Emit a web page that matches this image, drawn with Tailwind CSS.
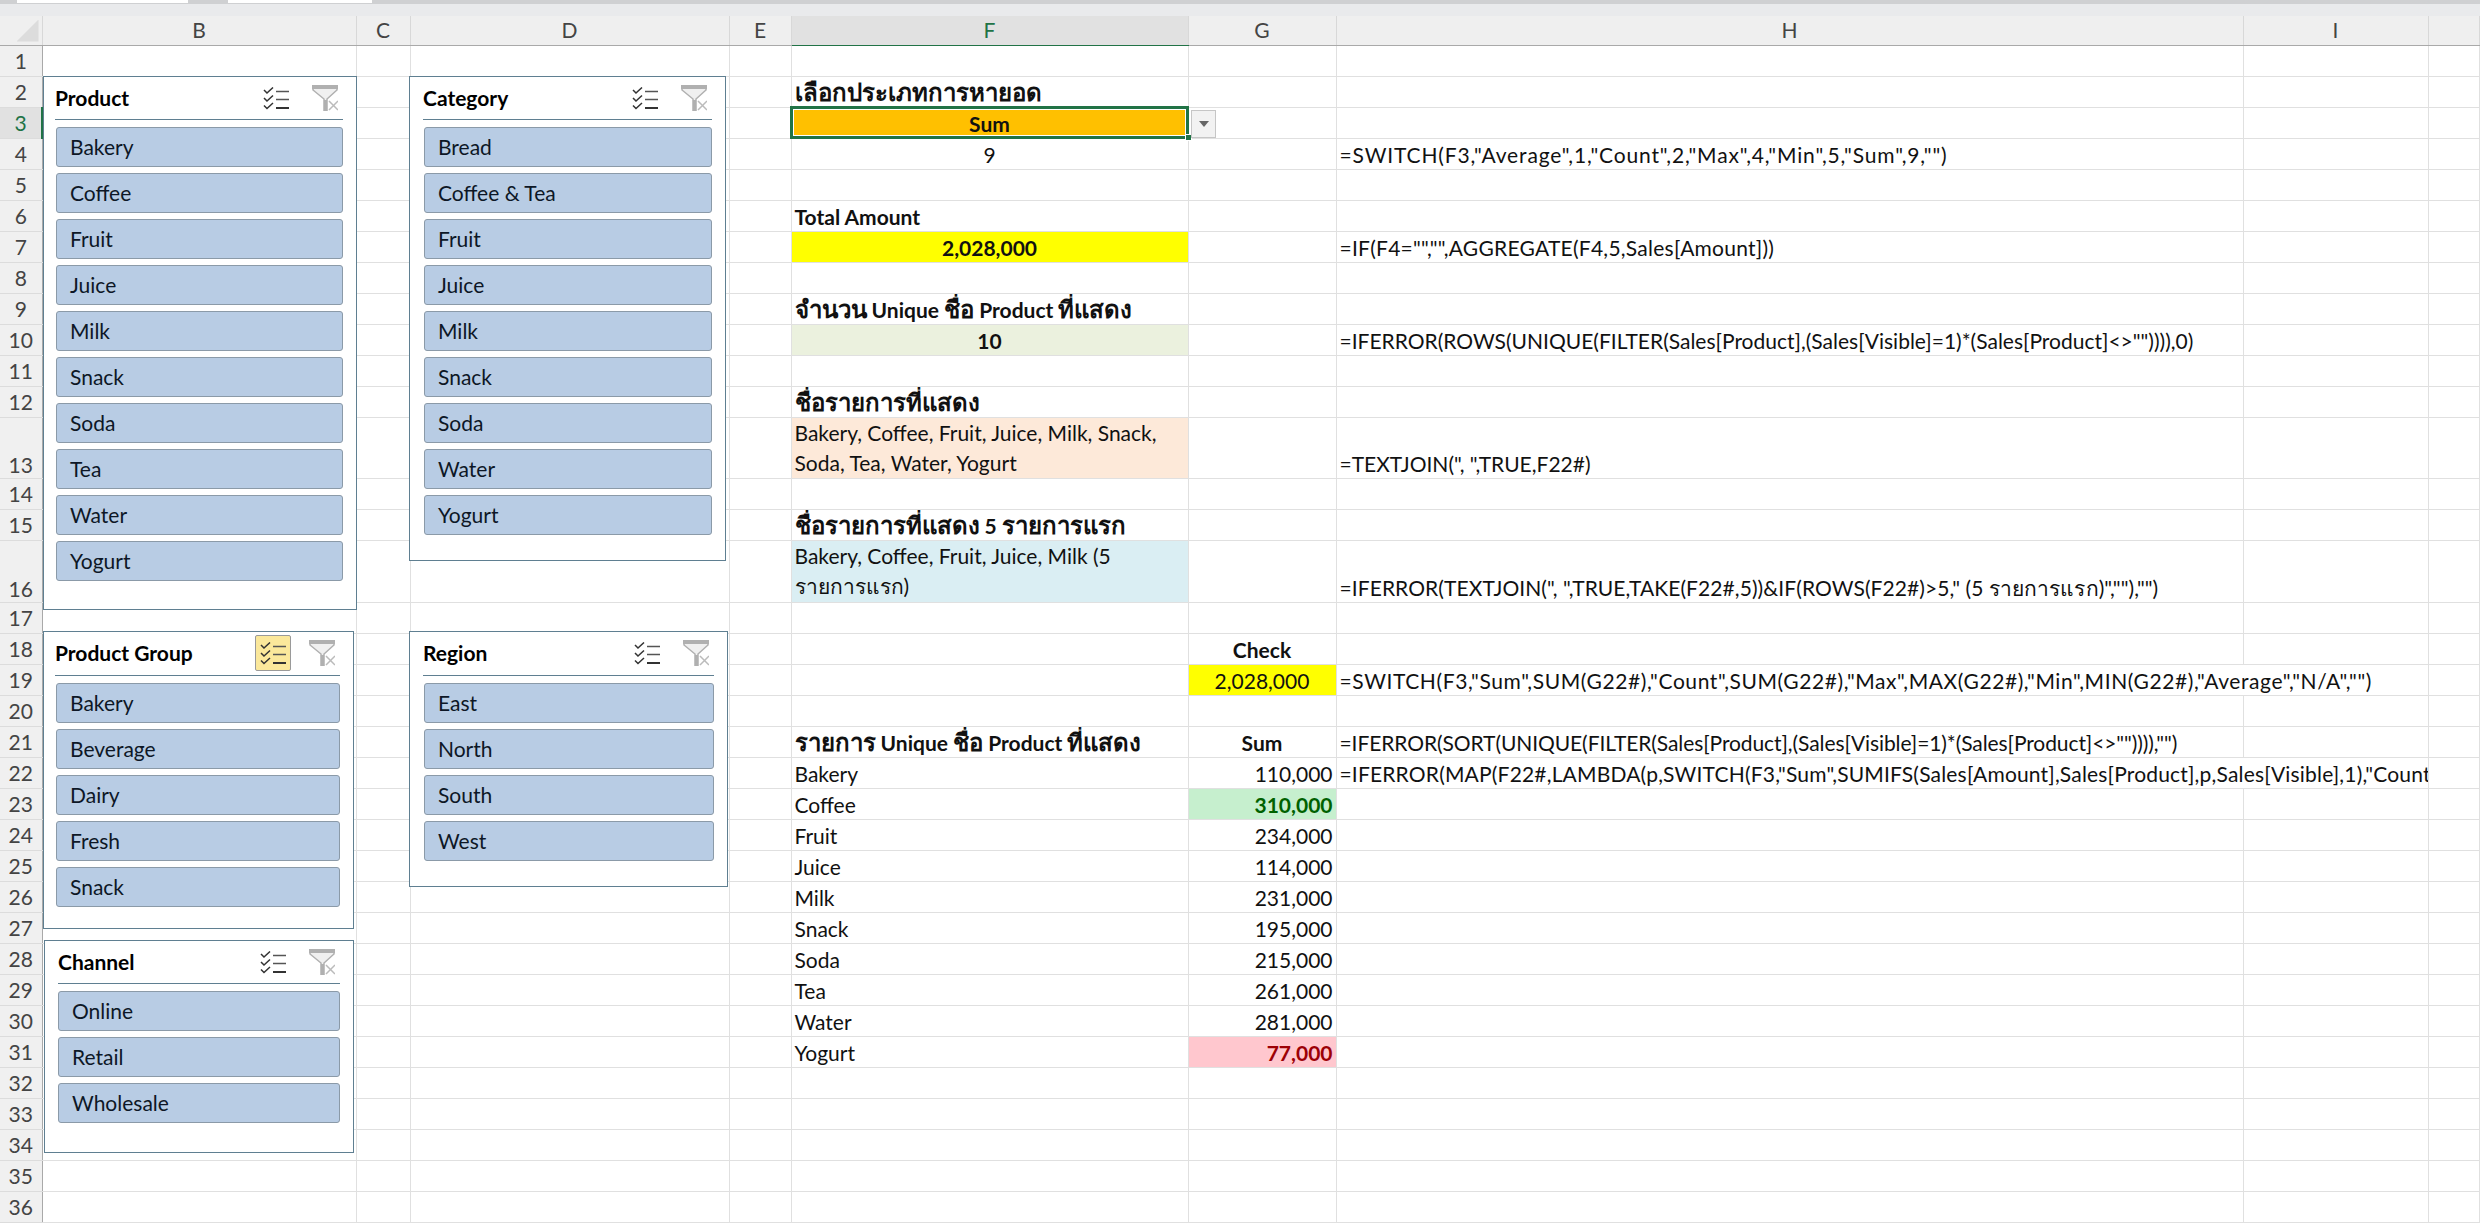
<!DOCTYPE html>
<html lang="en">
  <head>
    <meta charset="UTF-8" />
    <title>Sales Slicers</title>
    <script src="https://cdn.jsdelivr.net/npm/@tailwindcss/browser@4"></script>
  </head>
  <body class="relative w-[2480px] h-[1228px] overflow-hidden bg-white font-['Lato','Noto_Sans',sans-serif] text-[21px] text-[#111]">
    <!-- strip under the ribbon -->
    <div class="flex h-[16px] gap-[40px] border-t-[4px] border-[#cfd0d2] bg-[#e9eaec] pl-[17px]">
      <div class="-mt-[4px] h-[3px] w-[171px] bg-white"></div>
      <div class="-mt-[4px] h-[3px] w-[144px] bg-white"></div>
    </div>

    <table class="table-fixed border-collapse w-[2480px] [&_td]:border-r [&_td]:border-b [&_td]:border-[#e0e0e0] [&_td]:py-0 [&_td]:px-[3px] [&_td]:align-bottom [&_td]:leading-[28px] [&_td]:whitespace-nowrap [&_td]:overflow-hidden [&_th]:p-0 [&_th]:leading-[26px] [&_th]:font-normal [&_th]:text-[#444]">
      <colgroup>
        <col class="w-[42px]" /><col class="w-[314px]" /><col class="w-[54px]" /><col class="w-[319px]" /><col class="w-[62px]" /><col class="w-[397px]" /><col class="w-[148px]" /><col class="w-[907px]" /><col class="w-[185px]" /><col />
      </colgroup>
      <thead>
        <tr class="h-[29px] bg-[#efefef] [&_th]:border-r [&_th]:border-b [&_th]:border-r-[#d8d8d8] [&_th]:border-b-[#a9a9a9]">
          <th class="relative"><div class="absolute right-[3px] bottom-[3px] h-[22px] w-[22px] bg-[#dcdcdc] [clip-path:polygon(100%_0,100%_100%,0_100%)]"></div></th>
          <th>B</th><th>C</th><th>D</th><th>E</th>
          <th class="bg-[#e1e1e1] !text-[#217346] !border-b-[#217346] border-b-2">F</th>
          <th>G</th><th>H</th><th>I</th><th></th>
        </tr>
      </thead>
      <tbody class="[&_th]:bg-[#f0f0f0] [&_th]:border-r [&_th]:border-b [&_th]:border-r-[#a9a9a9] [&_th]:border-b-[#dcdcdc] [&_tr]:h-[31px]">
        <tr><th>1</th><td></td><td></td><td></td><td></td><td></td><td></td><td></td><td></td><td></td></tr>
        <tr><th>2</th><td></td><td></td><td></td><td></td><td class="font-bold"><span class="text-[24px]">เลือกประเภทการหายอด</span></td><td></td><td></td><td></td><td></td></tr>
        <tr><th class="!bg-[#e1e1e1] !text-[#217346] !border-r-2 !border-r-[#217346]">3</th><td></td><td></td><td></td><td></td><td class="bg-[#ffc000] text-center font-bold">Sum</td><td></td><td></td><td></td><td></td></tr>
        <tr><th>4</th><td></td><td></td><td></td><td></td><td class="text-center">9</td><td></td><td class="tracking-[0.85px]">=SWITCH(F3,"Average",1,"Count",2,"Max",4,"Min",5,"Sum",9,"")</td><td></td><td></td></tr>
        <tr><th>5</th><td></td><td></td><td></td><td></td><td></td><td></td><td></td><td></td><td></td></tr>
        <tr><th>6</th><td></td><td></td><td></td><td></td><td class="font-bold">Total Amount</td><td></td><td></td><td></td><td></td></tr>
        <tr><th>7</th><td></td><td></td><td></td><td></td><td class="bg-[#ffff00] text-center font-bold">2,028,000</td><td></td><td class="tracking-[0.25px]">=IF(F4="","",AGGREGATE(F4,5,Sales[Amount]))</td><td></td><td></td></tr>
        <tr><th>8</th><td></td><td></td><td></td><td></td><td></td><td></td><td></td><td></td><td></td></tr>
        <tr><th>9</th><td></td><td></td><td></td><td></td><td class="font-bold"><span class="text-[24px]">จำนวน</span> Unique <span class="text-[24px]">ชื่อ</span> Product <span class="text-[24px]">ที่แสดง</span></td><td></td><td></td><td></td><td></td></tr>
        <tr><th>10</th><td></td><td></td><td></td><td></td><td class="bg-[#ebf1de] text-center font-bold">10</td><td></td><td>=IFERROR(ROWS(UNIQUE(FILTER(Sales[Product],(Sales[Visible]=1)*(Sales[Product]&lt;&gt;"")))),0)</td><td></td><td></td></tr>
        <tr><th>11</th><td></td><td></td><td></td><td></td><td></td><td></td><td></td><td></td><td></td></tr>
        <tr><th>12</th><td></td><td></td><td></td><td></td><td class="font-bold"><span class="text-[24px]">ชื่อรายการที่แสดง</span></td><td></td><td></td><td></td><td></td></tr>
        <tr class="!h-[61px]"><th class="align-bottom">13</th><td></td><td></td><td></td><td></td><td class="bg-[#fde9d9] !whitespace-normal !leading-[30px]">Bakery, Coffee, Fruit, Juice, Milk, Snack, Soda, Tea, Water, Yogurt</td><td></td><td>=TEXTJOIN(", ",TRUE,F22#)</td><td></td><td></td></tr>
        <tr><th>14</th><td></td><td></td><td></td><td></td><td></td><td></td><td></td><td></td><td></td></tr>
        <tr><th>15</th><td></td><td></td><td></td><td></td><td class="font-bold"><span class="text-[24px]">ชื่อรายการที่แสดง</span> 5 <span class="text-[24px]">รายการแรก</span></td><td></td><td></td><td></td><td></td></tr>
        <tr class="!h-[62px]"><th class="align-bottom">16</th><td></td><td></td><td></td><td></td><td class="bg-[#daeef3] !whitespace-normal !leading-[30.5px]">Bakery, Coffee, Fruit, Juice, Milk (5 <span class="leading-[20px]">รายการแรก)</span></td><td></td><td class="tracking-[0.08px]">=IFERROR(TEXTJOIN(", ",TRUE,TAKE(F22#,5))&amp;IF(ROWS(F22#)&gt;5," (5 <span class="leading-[20px]">รายการแรก</span>)",""),"")</td><td></td><td></td></tr>
        <tr><th>17</th><td></td><td></td><td></td><td></td><td></td><td></td><td></td><td></td><td></td></tr>
        <tr><th>18</th><td></td><td></td><td></td><td></td><td></td><td class="text-center font-bold">Check</td><td></td><td></td><td></td></tr>
        <tr><th>19</th><td></td><td></td><td></td><td></td><td></td><td class="bg-[#ffff00] text-center">2,028,000</td><td colspan="2" class="tracking-[0.58px]">=SWITCH(F3,"Sum",SUM(G22#),"Count",SUM(G22#),"Max",MAX(G22#),"Min",MIN(G22#),"Average","N/A","")</td><td></td></tr>
        <tr><th>20</th><td></td><td></td><td></td><td></td><td></td><td></td><td></td><td></td><td></td></tr>
        <tr><th>21</th><td></td><td></td><td></td><td></td><td class="font-bold"><span class="text-[24px]">รายการ</span> Unique <span class="text-[24px]">ชื่อ</span> Product <span class="text-[24px]">ที่แสดง</span></td><td class="text-center font-bold">Sum</td><td class="tracking-[-0.09px]">=IFERROR(SORT(UNIQUE(FILTER(Sales[Product],(Sales[Visible]=1)*(Sales[Product]&lt;&gt;"")))),"")</td><td></td><td></td></tr>
        <tr><th>22</th><td></td><td></td><td></td><td></td><td>Bakery</td><td class="text-right">110,000</td><td colspan="2" class="tracking-[0.18px]">=IFERROR(MAP(F22#,LAMBDA(p,SWITCH(F3,"Sum",SUMIFS(Sales[Amount],Sales[Product],p,Sales[Visible],1),"Count"</td><td></td></tr>
        <tr><th>23</th><td></td><td></td><td></td><td></td><td>Coffee</td><td class="bg-[#c6efce] text-right font-bold text-[#006100]">310,000</td><td></td><td></td><td></td></tr>
        <tr><th>24</th><td></td><td></td><td></td><td></td><td>Fruit</td><td class="text-right">234,000</td><td></td><td></td><td></td></tr>
        <tr><th>25</th><td></td><td></td><td></td><td></td><td>Juice</td><td class="text-right">114,000</td><td></td><td></td><td></td></tr>
        <tr><th>26</th><td></td><td></td><td></td><td></td><td>Milk</td><td class="text-right">231,000</td><td></td><td></td><td></td></tr>
        <tr><th>27</th><td></td><td></td><td></td><td></td><td>Snack</td><td class="text-right">195,000</td><td></td><td></td><td></td></tr>
        <tr><th>28</th><td></td><td></td><td></td><td></td><td>Soda</td><td class="text-right">215,000</td><td></td><td></td><td></td></tr>
        <tr><th>29</th><td></td><td></td><td></td><td></td><td>Tea</td><td class="text-right">261,000</td><td></td><td></td><td></td></tr>
        <tr><th>30</th><td></td><td></td><td></td><td></td><td>Water</td><td class="text-right">281,000</td><td></td><td></td><td></td></tr>
        <tr><th>31</th><td></td><td></td><td></td><td></td><td>Yogurt</td><td class="bg-[#ffc7ce] text-right font-bold text-[#9c0006]">77,000</td><td></td><td></td><td></td></tr>
        <tr><th>32</th><td></td><td></td><td></td><td></td><td></td><td></td><td></td><td></td><td></td></tr>
        <tr><th>33</th><td></td><td></td><td></td><td></td><td></td><td></td><td></td><td></td><td></td></tr>
        <tr><th>34</th><td></td><td></td><td></td><td></td><td></td><td></td><td></td><td></td><td></td></tr>
        <tr><th>35</th><td></td><td></td><td></td><td></td><td></td><td></td><td></td><td></td><td></td></tr>
        <tr><th>36</th><td></td><td></td><td></td><td></td><td></td><td></td><td></td><td></td><td></td></tr>
      </tbody>
    </table>

    <!-- F3 selection and dropdown -->
    <div class="absolute left-[790px] top-[106px] h-[33px] w-[399px] border-[3px] border-[#217346]"><div class="h-full w-full border border-white"></div></div>
    <div class="absolute left-[1185px] top-[134px] h-[7px] w-[7px] border border-white bg-[#217346]"></div>
    <div class="absolute left-[1191px] top-[110px] flex h-[28px] w-[25px] items-center justify-center border border-[#c6c6c6] bg-[#f2f2f2]">
      <div class="h-0 w-0 border-x-[5px] border-t-[6px] border-x-transparent border-t-[#666]"></div>
    </div>

    <!-- Slicers -->
    <div class="absolute left-[43px] top-[76px] h-[534px] w-[314px] border border-[#5f7f91] bg-white pl-[11px] pr-[13px]">
      <div class="flex h-[43px] items-center border-b border-[#5f7f91] pr-[5px] font-bold text-black">
        <span class="flex-1">Product</span>
        <svg class="h-[23px] w-[26px]" viewBox="0 0 26 23" fill="none"><path d="M1 3l3 3 6-5.500M1 11l3 3 6-5.500M1 18.500l3 3 6-5.500" stroke="#333" stroke-width="1.500" /><path d="M13 4.500h13M13 12.500h13" stroke="#555" stroke-width="1.500" /><path d="M13 21h13" stroke="#333" stroke-width="2" /></svg>
        <svg class="ml-[23px] h-[26px] w-[26px]" viewBox="0 0 26 26" fill="none"><path d="M1 1h24v4l-10 9v12h-3V14L1 5z" fill="#f0f0f0" stroke="#b0b0b0" stroke-width="1.500" /><path d="M0 0h26v4H0z" fill="#b0b0b0" /><path d="M12 15h3v11h-3z" fill="#b0b0b0" /><path d="M17 16l9 9M26 16l-9 9" stroke="#bbb" stroke-width="1.500" /></svg>
      </div>
      <div class="ml-[1px] mt-[7px] flex flex-col gap-[6px] text-[#0d1726] [&>div]:flex [&>div]:h-[40px] [&>div]:items-center [&>div]:rounded-[3px] [&>div]:border [&>div]:border-[#8b9aa8] [&>div]:bg-[#b8cce4] [&>div]:pl-[13px]">
        <div>Bakery</div><div>Coffee</div><div>Fruit</div><div>Juice</div><div>Milk</div><div>Snack</div><div>Soda</div><div>Tea</div><div>Water</div><div>Yogurt</div>
      </div>
    </div>

    <div class="absolute left-[409px] top-[76px] h-[485px] w-[317px] border border-[#5f7f91] bg-white pl-[13px] pr-[13px]">
      <div class="flex h-[43px] items-center border-b border-[#5f7f91] pr-[5px] font-bold text-black">
        <span class="flex-1">Category</span>
        <svg class="h-[23px] w-[26px]" viewBox="0 0 26 23" fill="none"><path d="M1 3l3 3 6-5.500M1 11l3 3 6-5.500M1 18.500l3 3 6-5.500" stroke="#333" stroke-width="1.500" /><path d="M13 4.500h13M13 12.500h13" stroke="#555" stroke-width="1.500" /><path d="M13 21h13" stroke="#333" stroke-width="2" /></svg>
        <svg class="ml-[23px] h-[26px] w-[26px]" viewBox="0 0 26 26" fill="none"><path d="M1 1h24v4l-10 9v12h-3V14L1 5z" fill="#f0f0f0" stroke="#b0b0b0" stroke-width="1.500" /><path d="M0 0h26v4H0z" fill="#b0b0b0" /><path d="M12 15h3v11h-3z" fill="#b0b0b0" /><path d="M17 16l9 9M26 16l-9 9" stroke="#bbb" stroke-width="1.500" /></svg>
      </div>
      <div class="ml-[1px] mt-[7px] flex flex-col gap-[6px] text-[#0d1726] [&>div]:flex [&>div]:h-[40px] [&>div]:items-center [&>div]:rounded-[3px] [&>div]:border [&>div]:border-[#8b9aa8] [&>div]:bg-[#b8cce4] [&>div]:pl-[13px]">
        <div>Bread</div><div>Coffee &amp; Tea</div><div>Fruit</div><div>Juice</div><div>Milk</div><div>Snack</div><div>Soda</div><div>Water</div><div>Yogurt</div>
      </div>
    </div>

    <div class="absolute left-[43px] top-[631px] h-[298px] w-[311px] border border-[#5f7f91] bg-white pl-[11px] pr-[13px]">
      <div class="flex h-[44px] items-center border-b border-[#5f7f91] pb-[1px] pr-[5px] font-bold text-black">
        <span class="flex-1">Product Group</span>
        <div class="flex h-[36px] w-[36px] items-center justify-center rounded-[2px] border border-[#9a9a9a] bg-[#fbe89b]">
          <svg class="h-[23px] w-[26px]" viewBox="0 0 26 23" fill="none"><path d="M1 3l3 3 6-5.500M1 11l3 3 6-5.500M1 18.500l3 3 6-5.500" stroke="#333" stroke-width="1.500" /><path d="M13 4.500h13M13 12.500h13" stroke="#555" stroke-width="1.500" /><path d="M13 21h13" stroke="#333" stroke-width="2" /></svg>
        </div>
        <svg class="ml-[18px] h-[26px] w-[26px]" viewBox="0 0 26 26" fill="none"><path d="M1 1h24v4l-10 9v12h-3V14L1 5z" fill="#f0f0f0" stroke="#b0b0b0" stroke-width="1.500" /><path d="M0 0h26v4H0z" fill="#b0b0b0" /><path d="M12 15h3v11h-3z" fill="#b0b0b0" /><path d="M17 16l9 9M26 16l-9 9" stroke="#bbb" stroke-width="1.500" /></svg>
      </div>
      <div class="ml-[1px] mt-[7px] flex flex-col gap-[6px] text-[#0d1726] [&>div]:flex [&>div]:h-[40px] [&>div]:items-center [&>div]:rounded-[3px] [&>div]:border [&>div]:border-[#8b9aa8] [&>div]:bg-[#b8cce4] [&>div]:pl-[13px]">
        <div>Bakery</div><div>Beverage</div><div>Dairy</div><div>Fresh</div><div>Snack</div>
      </div>
    </div>

    <div class="absolute left-[409px] top-[631px] h-[256px] w-[319px] border border-[#5f7f91] bg-white pl-[13px] pr-[13px]">
      <div class="flex h-[44px] items-center border-b border-[#5f7f91] pb-[1px] pr-[5px] font-bold text-black">
        <span class="flex-1">Region</span>
        <svg class="h-[23px] w-[26px]" viewBox="0 0 26 23" fill="none"><path d="M1 3l3 3 6-5.500M1 11l3 3 6-5.500M1 18.500l3 3 6-5.500" stroke="#333" stroke-width="1.500" /><path d="M13 4.500h13M13 12.500h13" stroke="#555" stroke-width="1.500" /><path d="M13 21h13" stroke="#333" stroke-width="2" /></svg>
        <svg class="ml-[23px] h-[26px] w-[26px]" viewBox="0 0 26 26" fill="none"><path d="M1 1h24v4l-10 9v12h-3V14L1 5z" fill="#f0f0f0" stroke="#b0b0b0" stroke-width="1.500" /><path d="M0 0h26v4H0z" fill="#b0b0b0" /><path d="M12 15h3v11h-3z" fill="#b0b0b0" /><path d="M17 16l9 9M26 16l-9 9" stroke="#bbb" stroke-width="1.500" /></svg>
      </div>
      <div class="ml-[1px] mt-[7px] flex flex-col gap-[6px] text-[#0d1726] [&>div]:flex [&>div]:h-[40px] [&>div]:items-center [&>div]:rounded-[3px] [&>div]:border [&>div]:border-[#8b9aa8] [&>div]:bg-[#b8cce4] [&>div]:pl-[13px]">
        <div>East</div><div>North</div><div>South</div><div>West</div>
      </div>
    </div>

    <div class="absolute left-[44px] top-[940px] h-[213px] w-[310px] border border-[#5f7f91] bg-white pl-[13px] pr-[13px]">
      <div class="flex h-[43px] items-center border-b border-[#5f7f91] pr-[5px] font-bold text-black">
        <span class="flex-1">Channel</span>
        <svg class="h-[23px] w-[26px]" viewBox="0 0 26 23" fill="none"><path d="M1 3l3 3 6-5.500M1 11l3 3 6-5.500M1 18.500l3 3 6-5.500" stroke="#333" stroke-width="1.500" /><path d="M13 4.500h13M13 12.500h13" stroke="#555" stroke-width="1.500" /><path d="M13 21h13" stroke="#333" stroke-width="2" /></svg>
        <svg class="ml-[23px] h-[26px] w-[26px]" viewBox="0 0 26 26" fill="none"><path d="M1 1h24v4l-10 9v12h-3V14L1 5z" fill="#f0f0f0" stroke="#b0b0b0" stroke-width="1.500" /><path d="M0 0h26v4H0z" fill="#b0b0b0" /><path d="M12 15h3v11h-3z" fill="#b0b0b0" /><path d="M17 16l9 9M26 16l-9 9" stroke="#bbb" stroke-width="1.500" /></svg>
      </div>
      <div class="mt-[7px] flex flex-col gap-[6px] text-[#0d1726] [&>div]:flex [&>div]:h-[40px] [&>div]:items-center [&>div]:rounded-[3px] [&>div]:border [&>div]:border-[#8b9aa8] [&>div]:bg-[#b8cce4] [&>div]:pl-[13px]">
        <div>Online</div><div>Retail</div><div>Wholesale</div>
      </div>
    </div>
  </body>
</html>
